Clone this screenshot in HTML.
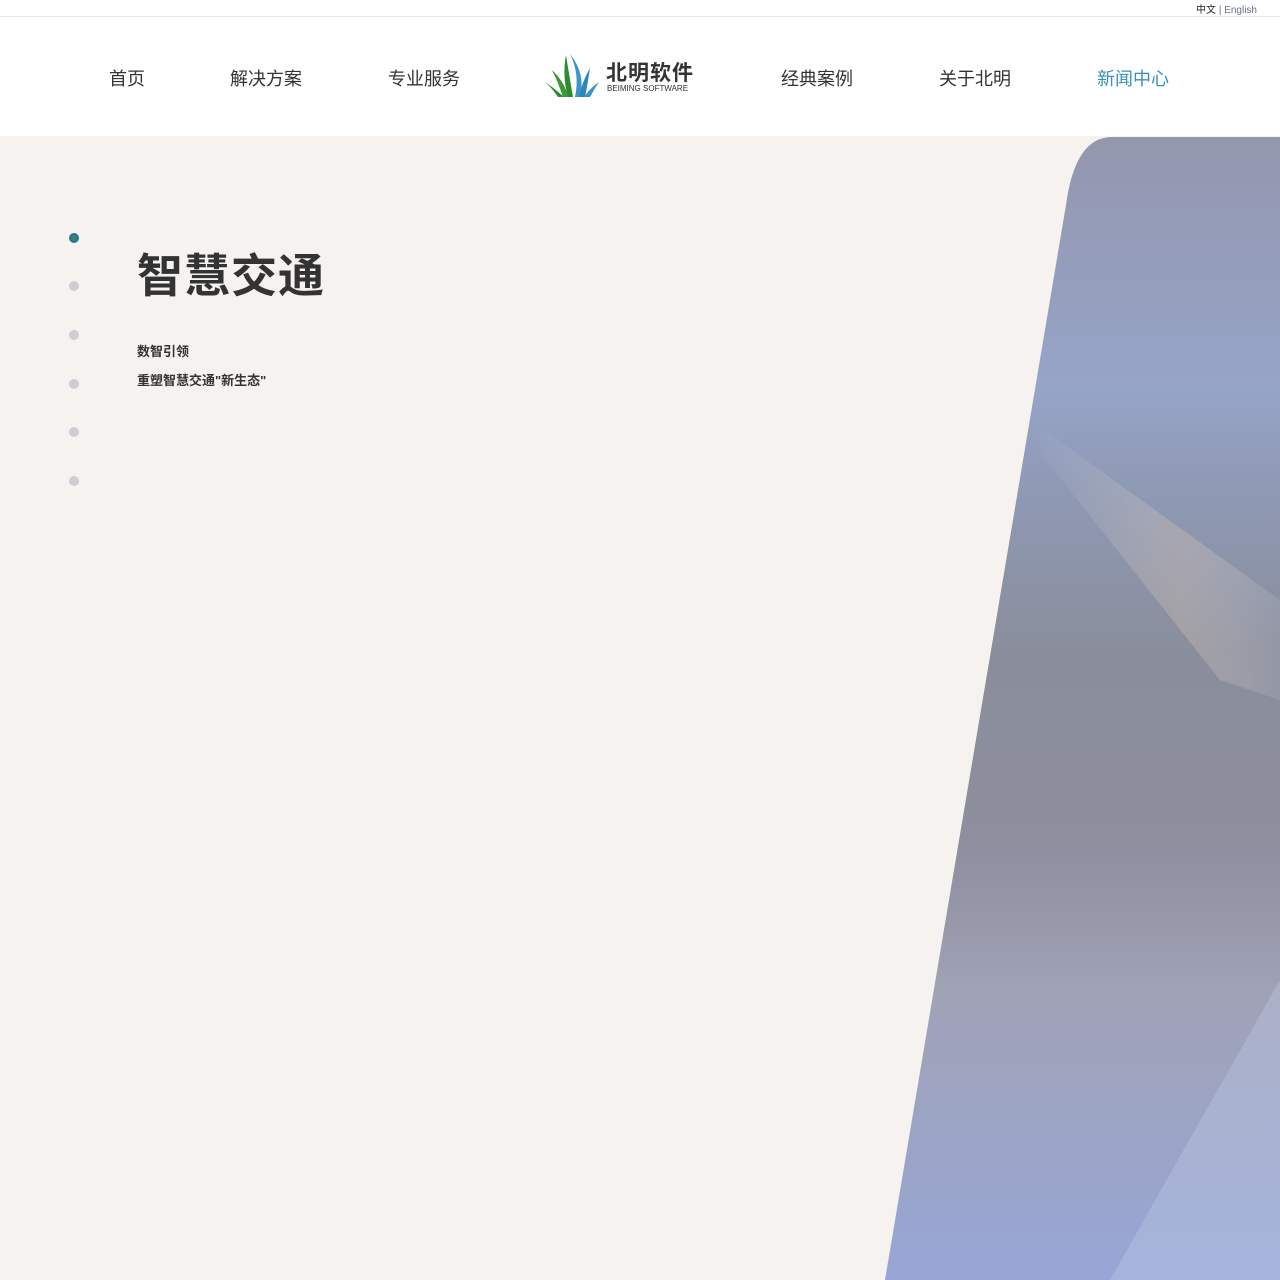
<!DOCTYPE html>
<html><head><meta charset="utf-8"><style>
*{margin:0;padding:0;box-sizing:border-box}
body{width:1280px;height:1280px;overflow:hidden;background:#f5f2ef;font-family:"Liberation Sans","Noto Sans CJK SC",sans-serif;position:relative}
.top{position:absolute;top:0;left:0;width:1280px;height:17px;background:#fff;border-bottom:1px solid #e6e6e6}
.lang{position:absolute;right:23px;top:1px;font-size:10px;color:#222}
.lang span{color:#6a7290}
.hdr{position:absolute;top:17px;left:0;width:1280px;height:119px;background:#fff}
.nav{position:absolute;top:66px;font-size:18px;color:#333}
.dot{position:absolute;left:69px;width:10px;height:10px;border-radius:50%;background:#cfcdd3}
h1{position:absolute;left:137px;top:240px;font-size:46px;font-weight:bold;color:#333;letter-spacing:1px}
.sub{position:absolute;left:137px;font-size:13px;font-weight:bold;color:#333}
</style></head><body>
<div class="top"><div class="lang">中文 <span>| English</span></div></div>
<div class="hdr">
<div class="nav" style="left:109px;top:48px">首页</div>
<div class="nav" style="left:230px;top:48px">解决方案</div>
<div class="nav" style="left:388px;top:48px">专业服务</div>
<div class="nav" style="left:781px;top:48px">经典案例</div>
<div class="nav" style="left:939px;top:48px">关于北明</div>
<div class="nav" style="left:1097px;top:48px;color:#3a8fc0">新闻中心</div>
<svg style="position:absolute;left:544px;top:35px" width="56" height="46" viewBox="0 0 56 46">
<path d="M1 30 Q8 36 14 45 L20 45 Q10 36 1 30Z" fill="#2e8b30"/>
<path d="M8 18 Q14 30 19 45 L25 45 Q19 28 8 18Z" fill="#3a9a35"/>
<path d="M22 3 Q18 24 24 45 L29 45 Q25 22 22 3Z" fill="#2e8b30"/>
<path d="M26 2 Q36 22 31 45 L36 45 Q42 22 26 2Z" fill="#3a95c8"/>
<path d="M46 16 Q38 30 35 45 L41 45 Q44 30 46 16Z" fill="#2f86b8"/>
<path d="M55 30 Q46 36 40 45 L46 45 Q51 36 55 30Z" fill="#3a95c8"/>
</svg>
<div style="position:absolute;left:606px;top:40px;font-size:21px;font-weight:bold;color:#333;letter-spacing:1px">北明软件</div>
<div style="position:absolute;left:607px;top:67px;font-size:8px;color:#333">BEIMING SOFTWARE</div>
</div>
<svg style="position:absolute;left:0;top:136px" width="1280" height="1144" viewBox="0 136 1280 1144">
<defs><linearGradient id="g" x1="0" y1="0" x2="0" y2="1">
<stop offset="0" stop-color="#9397ae"/><stop offset="0.22" stop-color="#96a4c8"/>
<stop offset="0.3" stop-color="#8f9ab6"/><stop offset="0.45" stop-color="#8a8e9c"/>
<stop offset="0.62" stop-color="#8d8e9e"/><stop offset="0.75" stop-color="#a0a2b6"/>
<stop offset="1" stop-color="#97a6d6"/></linearGradient>
<linearGradient id="h" x1="0" y1="0" x2="1" y2="0"><stop offset="0" stop-color="#fff" stop-opacity="0"/><stop offset="0.6" stop-color="#f5d8b8" stop-opacity="0.25"/><stop offset="1" stop-color="#fff" stop-opacity="0.08"/></linearGradient></defs>
<path d="M1112 137 L1280 137 L1280 1280 L885 1280 L1066 205 Q1075 137 1112 137Z" fill="url(#g)"/>
<path d="M1030 420 L1280 600 L1280 700 L1220 680 L1030 440Z" fill="url(#h)"/>
<path d="M1110 1280 L1280 980 L1280 1280Z" fill="#c8d4f0" opacity="0.3"/>
</svg>
<div class="dot" style="top:233px;background:#2e8b5a;border:2px solid #2a6fa8"></div>
<div class="dot" style="top:281px"></div>
<div class="dot" style="top:330px"></div>
<div class="dot" style="top:379px"></div>
<div class="dot" style="top:427px"></div>
<div class="dot" style="top:476px"></div>
<h1>智慧交通</h1>
<div class="sub" style="top:341px">数智引领</div>
<div class="sub" style="top:370px">重塑智慧交通"新生态"</div>
</body></html>
